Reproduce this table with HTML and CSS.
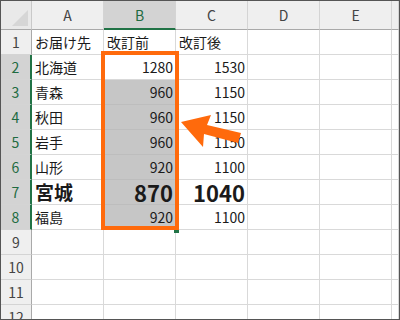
FILE: index.html
```html
<!DOCTYPE html>
<html lang="ja">
<head>
    <meta charset="UTF-8">
    <title>改訂前と改訂後</title>
    <link rel="stylesheet" href="styles.css">
</head>
<body>
    <div class="sheet">
        <div class="grid">
            <!-- column headings -->
            <div class="cell corner">
                <svg width="31" height="28" viewBox="0 0 31 28"><polygon points="11,25 27,25 27,9" fill="#d6d6d6"/></svg>
            </div>
            <div class="cell col-hd">A</div>
            <div class="cell col-hd on">B</div>
            <div class="cell col-hd">C</div>
            <div class="cell col-hd">D</div>
            <div class="cell col-hd">E</div>
            <div class="cell col-hd"></div>

            <!-- row 1 -->
            <div class="cell row-hd">1</div>
            <div class="cell">お届け先</div>
            <div class="cell">改訂前</div>
            <div class="cell">改訂後</div>
            <div class="cell"></div><div class="cell"></div><div class="cell"></div>

            <div class="cell row-hd on">2</div>
            <div class="cell">北海道</div>
            <div class="cell num">1280</div>
            <div class="cell num">1530</div>
            <div class="cell"></div><div class="cell"></div><div class="cell"></div>

            <div class="cell row-hd on">3</div>
            <div class="cell">青森</div>
            <div class="cell num sel">960</div>
            <div class="cell num">1150</div>
            <div class="cell"></div><div class="cell"></div><div class="cell"></div>

            <div class="cell row-hd on">4</div>
            <div class="cell">秋田</div>
            <div class="cell num sel">960</div>
            <div class="cell num">1150</div>
            <div class="cell"></div><div class="cell"></div><div class="cell"></div>

            <div class="cell row-hd on">5</div>
            <div class="cell">岩手</div>
            <div class="cell num sel">960</div>
            <div class="cell num">1150</div>
            <div class="cell"></div><div class="cell"></div><div class="cell"></div>

            <div class="cell row-hd on">6</div>
            <div class="cell">山形</div>
            <div class="cell num sel">920</div>
            <div class="cell num">1100</div>
            <div class="cell"></div><div class="cell"></div><div class="cell"></div>

            <div class="cell row-hd on">7</div>
            <div class="cell big">宮城</div>
            <div class="cell num sel big">870</div>
            <div class="cell num big">1040</div>
            <div class="cell"></div><div class="cell"></div><div class="cell"></div>

            <div class="cell row-hd on">8</div>
            <div class="cell">福島</div>
            <div class="cell num sel">920</div>
            <div class="cell num">1100</div>
            <div class="cell"></div><div class="cell"></div><div class="cell"></div>

            <div class="cell row-hd">9</div>
            <div class="cell"></div><div class="cell"></div><div class="cell"></div>
            <div class="cell"></div><div class="cell"></div><div class="cell"></div>

            <div class="cell row-hd">10</div>
            <div class="cell"></div><div class="cell"></div><div class="cell"></div>
            <div class="cell"></div><div class="cell"></div><div class="cell"></div>

            <div class="cell row-hd">11</div>
            <div class="cell"></div><div class="cell"></div><div class="cell"></div>
            <div class="cell"></div><div class="cell"></div><div class="cell"></div>

            <div class="cell row-hd">12</div>
            <div class="cell"></div><div class="cell"></div><div class="cell"></div>
            <div class="cell"></div><div class="cell"></div><div class="cell"></div>
        </div>

        <!-- selection handle and the orange frame round B2:B8 -->
        <div class="fill-handle"></div>
        <div class="mark"></div>

        <svg class="arrow" width="400" height="320" viewBox="0 0 400 320">
            <polygon points="181,122 211,115 207,125 241,133 238,143 204,134 203,147" fill="#ff6a0c"/>
        </svg>
    </div>
</body>
</html>
```

FILE: styles.css
```css
body {
    margin: 0;
    background: #fff;
}
.sheet {
    position: relative;
    width: 400px;
    height: 320px;
    box-sizing: border-box;
    border: 1px solid #555;
    overflow: hidden;
    font-family: "Noto Sans CJK JP", "Noto Sans", sans-serif;
    font-size: 14px;
    color: #1a1a1a;
}
.grid {
    display: grid;
    grid-template-columns: 31px repeat(5, 72px) 1fr;
    grid-template-rows: 29px repeat(12, 25px);
}
.cell {
    box-sizing: border-box;
    border-right: 1px solid #d9d9d9;
    border-bottom: 1px solid #d9d9d9;
    padding: 0 3px;
    line-height: 24px;
    white-space: nowrap;
}
.corner {
    padding: 0;
    background: #e9e9e9;
    border-bottom: 1px solid #a9a9a9;
    border-right: 1px solid #c9c9c9;
}
.corner svg {
    display: block;
}
.col-hd {
    background: #efefef;
    color: #444;
    text-align: center;
    line-height: 28px;
    border-right: 1px solid #d4d4d4;
    border-bottom: 1px solid #a9a9a9;
}
.col-hd.on {
    background: #d3d3d3;
    color: #1e6b41;
    border-bottom: 2px solid #217346;
}
.row-hd {
    background: #efefef;
    color: #444;
    text-align: center;
    padding: 0;
    border-right: 1px solid #a9a9a9;
    border-bottom: 1px solid #d4d4d4;
}
.row-hd.on {
    background: #d3d3d3;
    color: #1e6b41;
    border-right: 2px solid #217346;
}
.num {
    text-align: right;
    padding-right: 2px;
}
.sel {
    background: #c6c6c6;
    border-right-color: #c6c6c6;
    border-bottom-color: #bdbdbd;
}
.big {
    font-weight: bold;
    font-size: 19px;
}
.num.big {
    font-size: 22px;
}
.fill-handle {
    position: absolute;
    left: 173px;
    top: 228px;
    width: 5px;
    height: 4px;
    background: #217346;
}
.mark {
    position: absolute;
    left: 100px;
    top: 50px;
    width: 78px;
    height: 179px;
    box-sizing: border-box;
    border: 4px solid #ff6a0c;
}
.arrow {
    position: absolute;
    left: -1px;
    top: -1px;
}
```
